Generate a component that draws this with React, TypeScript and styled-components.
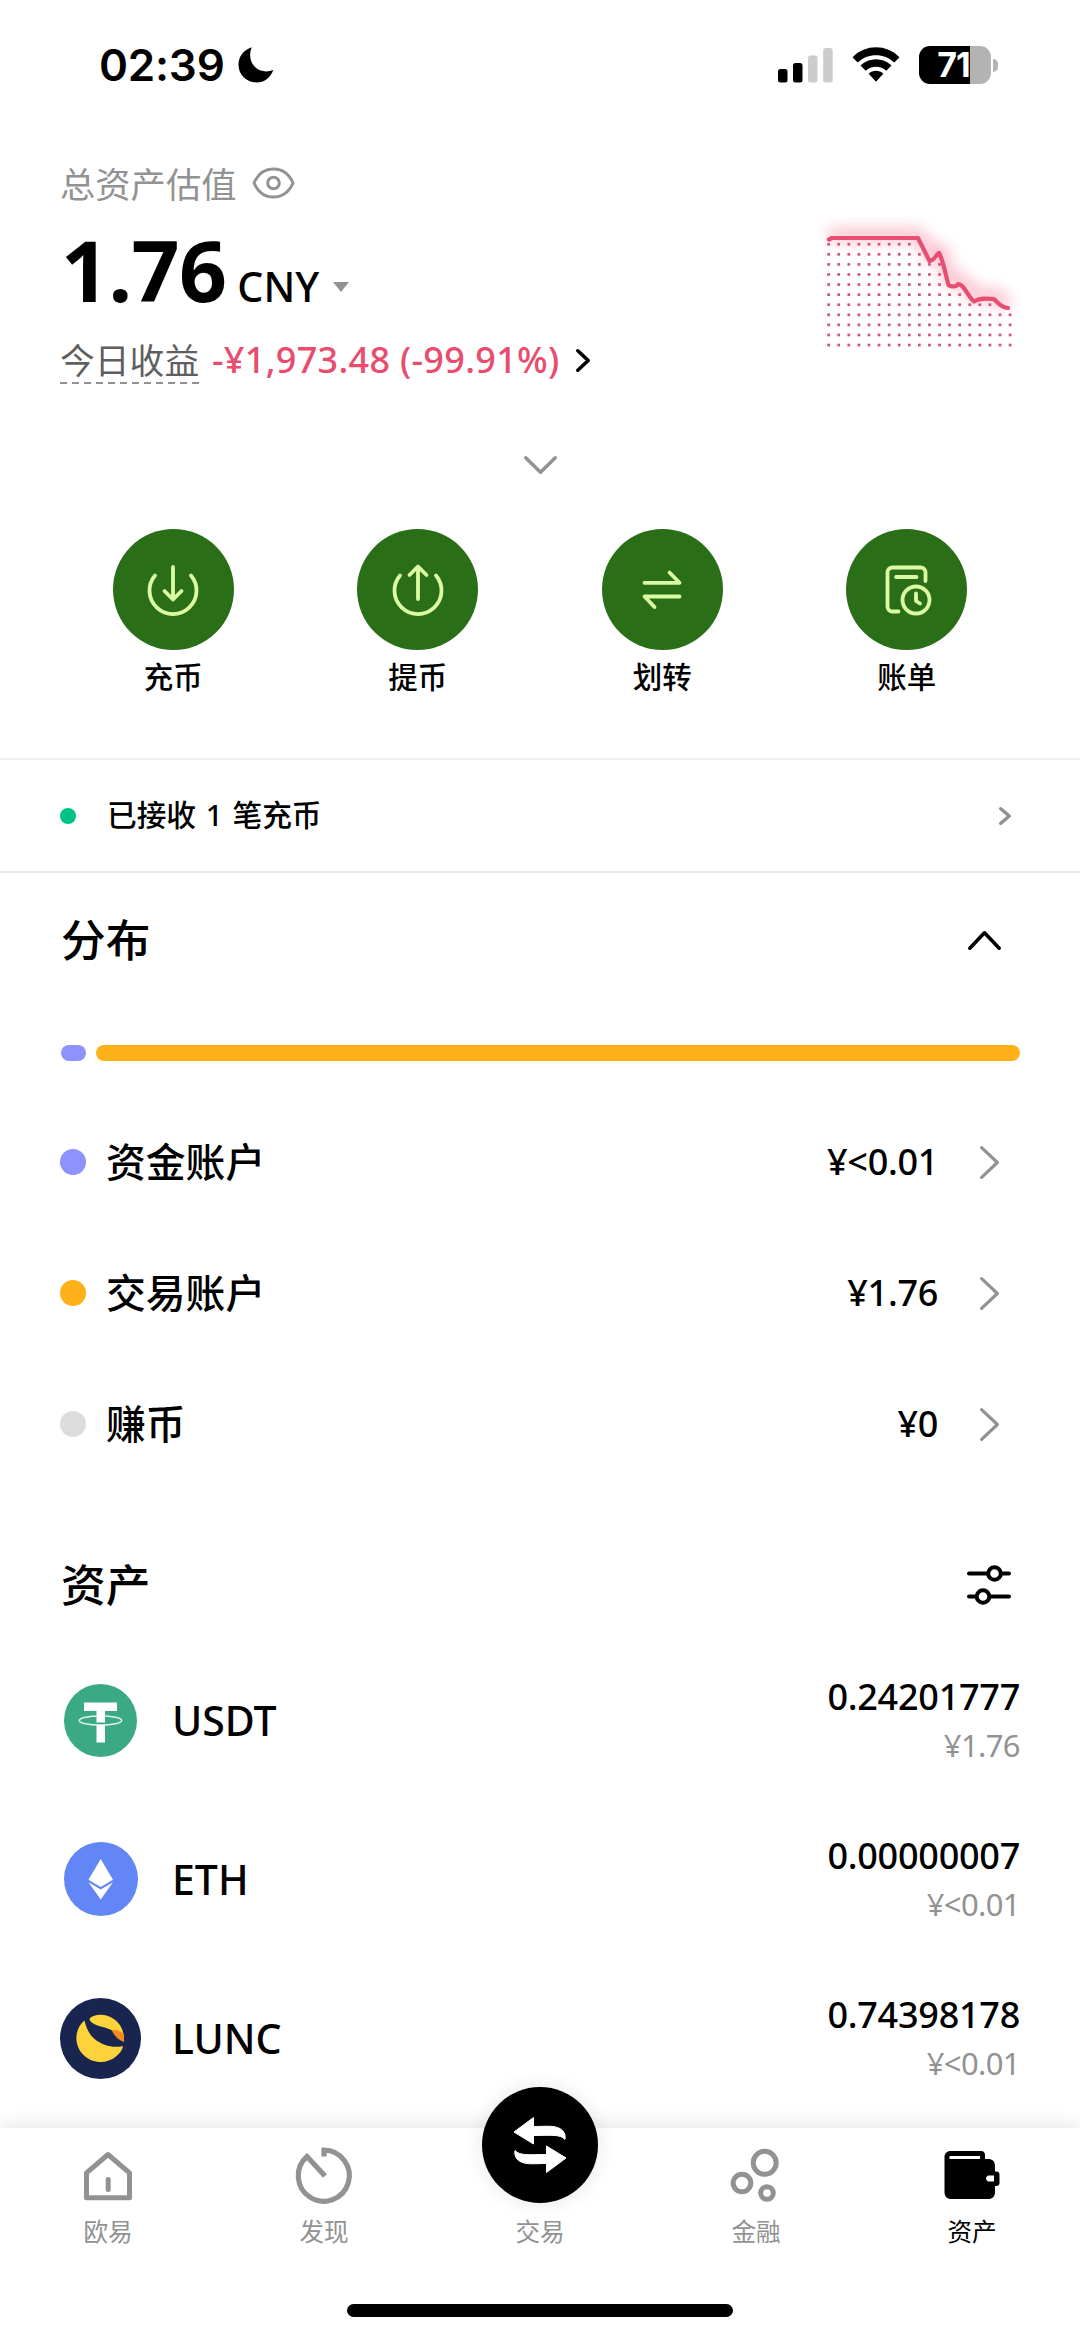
import React from 'react';
import styled, { createGlobalStyle } from 'styled-components';

const LATIN = '"Noto Sans", "Noto Sans CJK SC", sans-serif';
const HAN = '"Noto Sans CJK SC", "Noto Sans", sans-serif';
const GREY = '#929292';
const RED = '#e84d6f';
const LIME = '#dcfca4';

const GlobalStyle = createGlobalStyle`
  * { box-sizing: border-box; }
  html, body { margin: 0; padding: 0; background: #fff; }
  svg { display: block; flex: none; overflow: visible; }
`;

const Screen = styled.div`
  width: 1080px;
  height: 2337px;
  display: flex;
  flex-direction: column;
  overflow: hidden;
  background: #fff;
  color: #000;
  font-family: ${LATIN};
`;

const StatusBar = styled.header`
  height: 130px;
  flex: none;
  padding: 0 82px 0 99px;
  display: flex;
  align-items: center;
  justify-content: space-between;
`;
const StatusGroup = styled.div<{ $gap: number }>`
  display: flex;
  align-items: center;
  gap: ${(p) => p.$gap}px;
`;
const Clock = styled.span`
  font: 600 44px/52px Inter, sans-serif;
  letter-spacing: -0.2px;
`;
const BatteryWrap = styled.div`
  display: flex;
  align-items: center;
  gap: 2px;
`;
const Battery = styled.div`
  width: 72px;
  height: 38px;
  padding-right: 3px;
  border-radius: 11px;
  background: linear-gradient(90deg, #000 51px, #b3b3b3 51px);
  color: #fff;
  text-align: center;
  font: 700 34px/38px Inter, sans-serif;
  letter-spacing: -1px;
`;
const BatteryCap = styled.div`
  width: 5px;
  height: 13px;
  border-radius: 0 6px 6px 0;
  background: #b3b3b3;
`;

const Overview = styled.section`
  height: 270px;
  flex: none;
  padding: 0 60px;
  display: flex;
  justify-content: space-between;
`;
const Totals = styled.div`
  display: flex;
  flex-direction: column;
`;
const TotalLabel = styled.div`
  height: 52px;
  margin-top: 27px;
  display: flex;
  align-items: center;
  gap: 15px;
  color: ${GREY};
  font: 400 35.3px/52px ${HAN};
`;
const TotalRow = styled.div`
  height: 104px;
  margin-top: 9px;
  display: flex;
  align-items: baseline;
`;
const TotalValue = styled.span`
  margin-left: 1px;
  font-size: 84px;
  line-height: 104px;
  font-weight: 700;
  letter-spacing: -0.6px;
`;
const Currency = styled.span`
  margin-left: 11px;
  font-size: 41px;
  font-weight: 500;
`;
const Caret = styled.i`
  margin-left: 14px;
  align-self: center;
  position: relative;
  top: 17px;
  border: 8px solid transparent;
  border-top: 10px solid ${GREY};
  border-bottom: 0;
`;
const ProfitRow = styled.div`
  height: 50px;
  margin-top: 13px;
  display: flex;
  align-items: center;
`;
const ProfitLabel = styled.span`
  height: 48px;
  width: 139px;
  color: #5f5f5f;
  font: 400 34.8px/46px ${HAN};
  white-space: nowrap;
  background: repeating-linear-gradient(90deg, #929292 0 7.5px, transparent 7.5px 12px) 0 100% / 100% 2.5px no-repeat;
`;
const Profit = styled.span`
  margin: 0 16px 0 13px;
  color: ${RED};
  font-size: 36px;
  line-height: 48px;
  font-weight: 500;
  letter-spacing: 0.3px;
  white-space: pre;
`;
const ChartBox = styled.div`
  padding-top: 70px;
`;

const Expander = styled.div`
  height: 129px;
  flex: none;
  display: flex;
  justify-content: center;
  padding-top: 56px;
`;
const Actions = styled.nav`
  height: 229px;
  flex: none;
  padding: 0 51px;
  display: grid;
  grid-template-columns: repeat(4, 1fr);
`;
const Action = styled.div`
  display: flex;
  flex-direction: column;
  align-items: center;
  font: 500 29.5px/44px ${HAN};
`;
const ActionDisc = styled.div`
  width: 121px;
  height: 121px;
  margin-bottom: 3px;
  border-radius: 50%;
  background: #2a6e17;
  display: grid;
  place-items: center;
`;

const Notice = styled.div`
  height: 115px;
  flex: none;
  padding: 0 69px 0 60px;
  border-top: 2px solid #f0f0f0;
  border-bottom: 2px solid #e8e8e8;
  display: flex;
  align-items: center;
`;
const Dot = styled.i<{ $size: number; $color: string }>`
  width: ${(p) => p.$size}px;
  height: ${(p) => p.$size}px;
  flex: none;
  border-radius: 50%;
  background: ${(p) => p.$color};
`;
const NoticeText = styled.span`
  flex: 1;
  margin-left: 31px;
  padding-bottom: 2px;
  font: 500 29.7px/44px ${LATIN};
  word-spacing: 2px;
`;

const SectionHead = styled.div<{ $height: number; $right: number; $top?: number }>`
  height: ${(p) => p.$height}px;
  flex: none;
  padding: ${(p) => p.$top ?? 0}px ${(p) => p.$right}px 0 61px;
  display: flex;
  align-items: center;
  justify-content: space-between;
`;
const SectionTitle = styled.h2`
  margin: 0;
  padding-bottom: 5px;
  font: 500 44.7px/64px ${HAN};
`;
const ShareBar = styled.div`
  height: 16px;
  flex: none;
  margin: 38px 60px 35px 61px;
  display: flex;
  gap: 10px;
`;
const Share = styled.div<{ $color: string; $width?: number }>`
  flex: ${(p) => (p.$width ? `0 0 ${p.$width}px` : '1')};
  border-radius: 8px;
  background: ${(p) => p.$color};
`;
const AccountRow = styled.div`
  height: 131.2px;
  flex: none;
  padding: 0 81px 0 60px;
  display: flex;
  align-items: center;
`;
const AccountName = styled.span`
  flex: 1;
  margin-left: 20px;
  padding-bottom: 3px;
  font: 500 39.8px/56px ${HAN};
`;
const AccountValue = styled.span`
  margin-right: 42px;
  font-size: 36px;
  line-height: 50px;
  font-weight: 500;
  letter-spacing: -0.3px;
`;
const AccountChevron = styled.div`
  padding-top: 2px;
`;

const Coins = styled.main`
  flex: 1;
  min-height: 0;
  display: flex;
  flex-direction: column;
`;
const CoinRow = styled.div`
  height: 159px;
  flex: none;
  padding: 0 60px;
  display: flex;
  align-items: center;
`;
const CoinIcon = styled.div`
  width: 81px;
  height: 81px;
  display: grid;
  place-items: center;
`;
const CoinName = styled.span`
  flex: 1;
  margin-left: 31px;
  padding-bottom: 1px;
  font-size: 41px;
  line-height: 56px;
  font-weight: 500;
`;
const CoinNumbers = styled.div`
  display: flex;
  flex-direction: column;
  align-items: flex-end;
`;
const CoinAmount = styled.span`
  font-size: 36px;
  line-height: 49px;
  font-weight: 500;
  letter-spacing: -0.25px;
`;
const CoinFiat = styled.span`
  font-size: 31px;
  line-height: 48px;
  letter-spacing: -0.6px;
  color: ${GREY};
`;

const TabBar = styled.footer`
  position: relative;
  height: 209px;
  flex: none;
  display: flex;
  flex-direction: column;
  justify-content: space-between;
  align-items: center;
  padding-bottom: 20px;
  background: #fff;
  box-shadow: 0 -2px 18px rgba(0, 0, 0, 0.11);
`;
const Tabs = styled.div`
  width: 100%;
  display: grid;
  grid-template-columns: repeat(5, 1fr);
`;
const Tab = styled.div<{ $active?: boolean }>`
  display: flex;
  flex-direction: column;
  align-items: center;
  color: ${(p) => (p.$active ? '#000' : GREY)};
  font: 400 24.6px/36px ${HAN};
`;
const TabIcon = styled.div`
  height: 84px;
  padding-top: 18px;
`;
const TradeDisc = styled.div`
  width: 116px;
  height: 116px;
  margin: -41px 0 9px;
  border-radius: 50%;
  background: #000;
  box-shadow: 0 0 20px rgba(0, 0, 0, 0.1);
  display: grid;
  place-items: center;
`;
const HomeIndicator = styled.div`
  width: 386px;
  height: 13px;
  border-radius: 7px;
  background: #000;
`;

const Moon = () => (
  <svg width="36" height="36" viewBox="0 0 36 36">
    <path d="M13.800 0.300C10.800 7 12 14.500 16.500 19.500 21.500 24.500 28.500 25.700 35.300 23 32.500 31 26 35.500 18.500 35.500 8.500 35.500 0.500 27.800 0.500 17.800 0.500 9.500 5.500 3 13.800 0.300Z" />
  </svg>
);
const Signal = () => (
  <svg width="55" height="36" viewBox="0 0 55 36">
    <rect x="0" y="22" width="9.500" height="13.500" rx="2.500" />
    <rect x="15" y="16" width="9.500" height="19.500" rx="2.500" />
    <rect x="30" y="8.500" width="9.500" height="27" rx="2.500" fill="#ccc" />
    <rect x="45.200" y="1" width="9.500" height="34.500" rx="2.500" fill="#ccc" />
  </svg>
);
const Wifi = () => (
  <svg width="48" height="36" viewBox="0 0 48 36">
    <path d="M0.500 10.300C13.500-3 34.500-3 47.500 10.300L42.300 15.500C32.200 5.700 15.800 5.700 5.700 15.500Z" />
    <path d="M8.500 18.500c8.700-8.300 22.300-8.300 31 0l-5.200 5.200c-5.800-5.400-14.800-5.400-20.600 0Z" />
    <path d="M16.700 26.700c4.200-3.800 10.400-3.800 14.600 0L24 34.800Z" />
  </svg>
);
const Eye = () => (
  <svg width="43" height="32" viewBox="0 0 43 32" fill="none" stroke={GREY} strokeWidth="3">
    <path d="M2 16C6 7 13 2 21.500 2S37 7 41 16C37 25 30 30 21.500 30S6 25 2 16Z" strokeLinejoin="round" />
    <circle cx="21.500" cy="16" r="5.800" />
  </svg>
);

type ChevronProps = { w: number; h: number; dir: 'right' | 'up' | 'down'; color: string; stroke: number };
const Chevron = ({ w, h, dir, color, stroke }: ChevronProps) => {
  const s = stroke / 2;
  const points = {
    right: `${s},${s} ${w - s},${h / 2} ${s},${h - s}`,
    up: `${s},${h - s} ${w / 2},${s} ${w - s},${h - s}`,
    down: `${s},${s} ${w / 2},${h - s} ${w - s},${s}`,
  }[dir];
  return (
    <svg width={w} height={h} viewBox={`0 0 ${w} ${h}`}>
      <polyline points={points} fill="none" stroke={color} strokeWidth={stroke} strokeLinecap="round" strokeLinejoin="round" />
    </svg>
  );
};

// Number of columns of dots that lie under the line, for each row of the grid.
const DOTS_PER_ROW = [9, 10, 12, 12, 12, 14, 17, 19, 19, 19, 19];

const TrendChart = () => (
  <svg width="192" height="150" viewBox="828 200 192 150">
    <defs>
      <filter id="glow" x="-20%" y="-60%" width="140%" height="220%">
        <feGaussianBlur stdDeviation="7.5" />
      </filter>
    </defs>
    <g fill="none" strokeLinejoin="round" strokeLinecap="round">
      <path
        d="M833 235H919L932 256 941 250 950 280 962 280 976 296 995 295 1005 302"
        stroke="#f5476f"
        strokeWidth="11"
        opacity="0.42"
        filter="url(#glow)"
      />
      <path
        d="M829 239.500L832 238H918L929.500 261C934 260.500 936 255 939 253 943 259 945 273 948.500 285 952 287.500 957 286.500 958 284 964 284 968 297 974 301.500 980 297.500 987 298.500 994 299 999 304 1002 307.500 1008 308"
        stroke="#e84d72"
        strokeWidth="4.200"
      />
    </g>
    {DOTS_PER_ROW.map((count, row) =>
      Array.from({ length: count }, (_, col) => (
        <rect key={`${row}-${col}`} x={827.3 + col * 10.08} y={242.9 + row * 10.08} width="2.700" height="2.700" fill="#d4517a" />
      )),
    )}
  </svg>
);

const iconProps = {
  width: 56,
  height: 56,
  viewBox: '0 0 56 56',
  fill: 'none',
  stroke: LIME,
  strokeWidth: 3.8,
  strokeLinecap: 'round' as const,
  strokeLinejoin: 'round' as const,
};
const DepositIcon = () => (
  <svg {...iconProps}>
    <path d="M10 13.500A23.500 23.500 0 1 0 46 13.500M28 5V37M19.500 29L28 37.500 36.500 29" />
  </svg>
);
const WithdrawIcon = () => (
  <svg {...iconProps}>
    <path d="M10 13.500A23.500 23.500 0 1 0 46 13.500M28 37V5M19.500 13L28 4.500 36.500 13" />
  </svg>
);
const TransferIcon = () => (
  <svg {...iconProps}>
    <path d="M10.500 20.800H45.500L35.500 10.500M45.500 34.500H10.500L20.500 45" />
  </svg>
);
const BillIcon = () => (
  <svg {...iconProps}>
    <path d="M46.500 19V10.500A5 5 0 0 0 41.500 5.500H13.500A5 5 0 0 0 8.500 10.500V44.500A5 5 0 0 0 13.500 49.500H19.500M17 15H37.500" />
    <circle cx="37" cy="38" r="13.500" />
    <path d="M37 31.500V39L41 41.500" />
  </svg>
);
const FilterIcon = () => (
  <svg width="44" height="40" viewBox="0 0 44 40" fill="none" stroke="#000" strokeWidth="4" strokeLinecap="round">
    <path d="M2 8.500H20M35 8.500H42M2 31.500H9M24 31.500H42" />
    <circle cx="27.500" cy="8.500" r="6.300" />
    <circle cx="16" cy="31.500" r="6.300" />
  </svg>
);

const UsdtLogo = () => (
  <svg width="73" height="73" viewBox="0 0 73 73">
    <circle cx="36.500" cy="36.500" r="36.500" fill="#3ba983" />
    <path d="M20 18.500H53V27H41V38.500H32.500V27H20Z" fill="#fff" />
    <path d="M32.500 41H41V58.500H32.500Z" fill="#fff" />
    <ellipse cx="36.500" cy="36.500" rx="21.200" ry="4.600" fill="none" stroke="#fff" strokeOpacity="0.85" strokeWidth="1.500" />
  </svg>
);
const EthLogo = () => (
  <svg width="74" height="74" viewBox="0 0 74 74">
    <circle cx="37" cy="37" r="37" fill="#6286f6" />
    <path d="M36.700 17L49 37.800 36.700 45 24.500 37.800Z" fill="#fff" />
    <path d="M24.500 40.300L36.700 47.500 49 40.300 36.700 57.500Z" fill="#fff" />
  </svg>
);
const LuncLogo = () => (
  <svg width="81" height="81" viewBox="0 0 81 81">
    <circle cx="40.500" cy="40.500" r="40.500" fill="#18264f" />
    <path d="M24.500 22.500C14 31 13.500 48 24 57.500 33 66 47 66 56 58.500 60 55.500 62.500 51.500 63 48 54 50.500 42 47.500 34 40.500 28.500 35.500 26 29 24.500 22.500Z" fill="#fdd33b" />
    <path d="M30 20C33 17 41 15.500 48 18 57.500 21.500 63.500 29.500 64 40 57.500 33.500 49 30.500 41 28.500 35 27 28 23.500 30 20Z" fill="#fdd33b" />
    <path d="M51.500 32C57.500 31.500 62.500 33.500 64 37V44C59 42.500 54.500 38.500 51.500 32Z" fill="#fb8a1c" />
  </svg>
);

const HomeIcon = () => (
  <svg width="60" height="60" viewBox="0 0 60 60" fill="none" stroke={GREY} strokeWidth="5" strokeLinejoin="round">
    <path d="M8.500 26.800L30 8.500 51.500 26.800V51.700H8.500Z" />
    <path d="M30.200 33.500V43.500" strokeLinecap="round" />
  </svg>
);
const DiscoverIcon = () => (
  <svg width="60" height="60" viewBox="0 0 60 60" fill="none" stroke={GREY} strokeWidth="5.200">
    <path d="M31.500 30L13.500 10.500A25.500 25.500 0 1 0 30.500 4.200V10.500" transform="translate(-.5 0)" />
  </svg>
);
const TradeIcon = () => (
  <svg width="54" height="58" viewBox="0 0 54 58" fill="#fff" stroke="#fff" strokeWidth="1" strokeLinejoin="round">
    <path d="M1 16L20.500 1.500V10.500C34 10.500 44 8.500 50 15 52 17.500 52.500 20.500 52 23.500 47 18 38 19.500 20.500 19.500V28Z" />
    <path d="M53 42L33.500 56.500V47.500C20 47.500 10 49.500 4 43 2 40.500 1.500 37.500 2 34.500 7 40 16 38.500 33.500 38.500V30Z" />
  </svg>
);
const FinanceIcon = () => (
  <svg width="60" height="60" viewBox="0 0 60 60" fill="none" stroke={GREY} strokeWidth="5">
    <circle cx="38.700" cy="16.800" r="11.500" />
    <circle cx="16" cy="37" r="8.800" />
    <circle cx="41" cy="47" r="6.300" />
  </svg>
);
const WalletIcon = () => (
  <svg width="60" height="60" viewBox="0 0 60 60">
    <path
      fillRule="evenodd"
      d="M8.500 5H39C41.500 5 43 6.500 43 9V13H46C50.500 13 53 15.500 53 20V25.500H54.500C56.300 25.500 57.500 26.700 57.500 28.500V37C57.500 38.800 56.300 40 54.500 40H53V46C53 50.500 50.500 53 46 53H9.500C5 53 2.500 50.500 2.500 46V11C2.500 7.500 5 5 8.500 5ZM7.500 10V13H38V10ZM46 29.500L44 31.500V33.500L46 35.500H52V29.500Z"
    />
  </svg>
);

const actions = [
  { label: '充币', Icon: DepositIcon },
  { label: '提币', Icon: WithdrawIcon },
  { label: '划转', Icon: TransferIcon },
  { label: '账单', Icon: BillIcon },
];
const accounts = [
  { name: '资金账户', value: '¥<0.01', color: '#8e92ff' },
  { name: '交易账户', value: '¥1.76', color: '#ffb119' },
  { name: '赚币', value: '¥0', color: '#dcdcdc' },
];
const coins = [
  { name: 'USDT', amount: '0.24201777', fiat: '¥1.76', Logo: UsdtLogo },
  { name: 'ETH', amount: '0.00000007', fiat: '¥<0.01', Logo: EthLogo },
  { name: 'LUNC', amount: '0.74398178', fiat: '¥<0.01', Logo: LuncLogo },
];

export default function App() {
  return (
    <Screen>
      <GlobalStyle />
      <StatusBar>
        <StatusGroup $gap={13}>
          <Clock>02:39</Clock>
          <Moon />
        </StatusGroup>
        <StatusGroup $gap={19}>
          <Signal />
          <Wifi />
          <BatteryWrap>
            <Battery>71</Battery>
            <BatteryCap />
          </BatteryWrap>
        </StatusGroup>
      </StatusBar>

      <Overview>
        <Totals>
          <TotalLabel>
            总资产估值
            <Eye />
          </TotalLabel>
          <TotalRow>
            <TotalValue>1.76</TotalValue>
            <Currency>CNY</Currency>
            <Caret />
          </TotalRow>
          <ProfitRow>
            <ProfitLabel>今日收益</ProfitLabel>
            <Profit>-¥1,973.48 (-99.91%)</Profit>
            <Chevron w={14} h={23} dir="right" color="#000" stroke={3.6} />
          </ProfitRow>
        </Totals>
        <ChartBox>
          <TrendChart />
        </ChartBox>
      </Overview>

      <Expander>
        <Chevron w={33} h={18} dir="down" color={GREY} stroke={3.5} />
      </Expander>

      <Actions>
        {actions.map(({ label, Icon }) => (
          <Action key={label}>
            <ActionDisc>
              <Icon />
            </ActionDisc>
            {label}
          </Action>
        ))}
      </Actions>

      <Notice>
        <Dot $size={16} $color="#00c288" />
        <NoticeText>已接收 1 笔充币</NoticeText>
        <Chevron w={12} h={18} dir="right" color={GREY} stroke={3.5} />
      </Notice>

      <SectionHead $height={134} $right={79}>
        <SectionTitle>分布</SectionTitle>
        <Chevron w={33} h={19} dir="up" color="#000" stroke={3.6} />
      </SectionHead>
      <ShareBar>
        <Share $color="#8e92ff" $width={25} />
        <Share $color="#ffb119" />
      </ShareBar>
      {accounts.map(({ name, value, color }) => (
        <AccountRow key={name}>
          <Dot $size={26} $color={color} />
          <AccountName>{name}</AccountName>
          <AccountValue>{value}</AccountValue>
          <AccountChevron>
            <Chevron w={19} h={33} dir="right" color={GREY} stroke={3.2} />
          </AccountChevron>
        </AccountRow>
      ))}

      <SectionHead $height={151} $right={69} $top={40}>
        <SectionTitle>资产</SectionTitle>
        <FilterIcon />
      </SectionHead>
      <Coins>
        {coins.map(({ name, amount, fiat, Logo }) => (
          <CoinRow key={name}>
            <CoinIcon>
              <Logo />
            </CoinIcon>
            <CoinName>{name}</CoinName>
            <CoinNumbers>
              <CoinAmount>{amount}</CoinAmount>
              <CoinFiat>{fiat}</CoinFiat>
            </CoinNumbers>
          </CoinRow>
        ))}
      </Coins>

      <TabBar>
        <Tabs>
          <Tab>
            <TabIcon><HomeIcon /></TabIcon>
            欧易
          </Tab>
          <Tab>
            <TabIcon><DiscoverIcon /></TabIcon>
            发现
          </Tab>
          <Tab>
            <TradeDisc><TradeIcon /></TradeDisc>
            交易
          </Tab>
          <Tab>
            <TabIcon><FinanceIcon /></TabIcon>
            金融
          </Tab>
          <Tab $active>
            <TabIcon><WalletIcon /></TabIcon>
            资产
          </Tab>
        </Tabs>
        <HomeIndicator />
      </TabBar>
    </Screen>
  );
}
